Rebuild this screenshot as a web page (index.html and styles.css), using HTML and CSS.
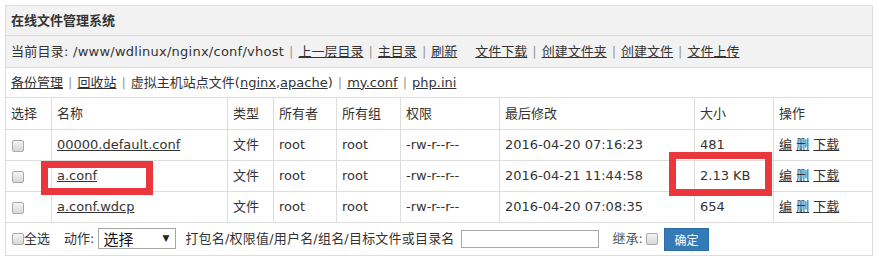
FILE: index.html
```html
<!DOCTYPE html>
<html lang="zh-CN">
<head>
<meta charset="utf-8">
<title>在线文件管理系统</title>
<link rel="stylesheet" href="styles.css">
</head>
<body>
<div class="page">
  <table class="fm">
    <colgroup>
      <col class="c-sel"><col class="c-name"><col class="c-type"><col class="c-owner"><col class="c-group"><col class="c-perm"><col class="c-mtime"><col class="c-size"><col class="c-ops">
    </colgroup>
    <tr class="title-row"><td colspan="9">在线文件管理系统</td></tr>
    <tr class="dir-row"><td colspan="9"><span class="path">当前目录: /www/wdlinux/nginx/conf/vhost</span><span class="sep">|</span><a href="#">上一层目录</a><span class="sep">|</span><a href="#">主目录</a><span class="sep">|</span><a href="#">刷新</a><a href="#" class="gap">文件下载</a><span class="sep">|</span><a href="#">创建文件夹</a><span class="sep">|</span><a href="#">创建文件</a><span class="sep">|</span><a href="#">文件上传</a></td></tr>
    <tr class="link-row"><td colspan="9"><a href="#">备份管理</a><span class="sep">|</span><a href="#">回收站</a><span class="sep">|</span>虚拟主机站点文件(<a href="#">nginx</a>,<a href="#">apache</a>)<span class="sep">|</span><a href="#">my.conf</a><span class="sep">|</span><a href="#">php.ini</a></td></tr>
    <tr class="head-row">
      <td>选择</td><td>名称</td><td>类型</td><td>所有者</td><td>所有组</td><td>权限</td><td>最后修改</td><td>大小</td><td>操作</td>
    </tr>
    <tr>
      <td><input type="checkbox" class="cb"></td><td><a href="#">00000.default.conf</a></td><td>文件</td><td>root</td><td>root</td><td>-rw-r--r--</td><td>2016-04-20 07:16:23</td><td>481</td><td class="ops"><a href="#">编</a> <a href="#">删</a> <a href="#">下载</a></td>
    </tr>
    <tr>
      <td><input type="checkbox" class="cb"></td><td><a href="#">a.conf</a></td><td>文件</td><td>root</td><td>root</td><td>-rw-r--r--</td><td>2016-04-21 11:44:58</td><td>2.13 KB</td><td class="ops"><a href="#">编</a> <a href="#">删</a> <a href="#">下载</a></td>
    </tr>
    <tr>
      <td><input type="checkbox" class="cb"></td><td><a href="#">a.conf.wdcp</a></td><td>文件</td><td>root</td><td>root</td><td>-rw-r--r--</td><td>2016-04-20 07:08:35</td><td>654</td><td class="ops"><a href="#">编</a> <a href="#">删</a> <a href="#">下载</a></td>
    </tr>
    <tr class="foot-row">
      <td colspan="9">
        <div class="actions">
          <label class="all"><input type="checkbox" class="cb">全选</label>
          <span class="act-label">动作:</span>
          <span class="sel-wrap"><select class="sel"><option>选择</option></select><span class="arrow">▼</span></span>
          <span class="hint">打包名/权限值/用户名/组名/目标文件或目录名</span>
          <input type="text" class="txt">
          <span class="inherit">继承:</span><input type="checkbox" class="cb">
          <button class="ok">确定</button>
        </div>
      </td>
    </tr>
  </table>
  <div class="mark mark-name"></div>
  <div class="mark mark-size"></div>
</div>
</body>
</html>
```

FILE: styles.css
```css
html, body {
  margin: 0;
  padding: 0;
  background: #fff;
}
body {
  font-family: "DejaVu Sans", "Noto Sans CJK SC", sans-serif;
  font-size: 13px;
  color: #333;
}
.page {
  position: relative;
  padding: 5px;
}
.fm {
  border-collapse: collapse;
  table-layout: fixed;
  width: 868px;
}
.fm td {
  border: 1px solid #ddd;
  padding: 0 5px;
  height: 30px;
  line-height: 20px;
  white-space: nowrap;
  overflow: hidden;
  vertical-align: middle;
}
.c-sel { width: 46px; }
.c-name { width: 176px; }
.c-type { width: 46px; }
.c-owner { width: 63px; }
.c-group { width: 64px; }
.c-perm { width: 99px; }
.c-mtime { width: 195px; }
.c-size { width: 79px; }
.c-ops { width: 99px; }

.fm a {
  color: #333;
  text-decoration: underline;
}
.title-row td {
  background: #f2f2f2;
  font-weight: bold;
  height: 29px;
}
.dir-row td {
  background: #f2f2f2;
  height: 31px;
}
.path { letter-spacing: 0.25px; }
.link-row td { height: 29px; }
.head-row td { height: 31px; }
.sep {
  color: #999;
  margin: 0 5px;
}
.gap { margin-left: 18px; }

.cb {
  -webkit-appearance: none;
  appearance: none;
  width: 12px;
  height: 12px;
  margin: 0 0 0 1px;
  border: 1px solid #a9a9a9;
  border-radius: 2px;
  background: linear-gradient(#f4f4f4, #d8d8d8);
  vertical-align: middle;
}

.foot-row td { height: 32px; }
.actions {
  display: flex;
  align-items: center;
}
.all {
  display: flex;
  align-items: center;
}
.act-label { margin-left: 14px; margin-right: 4px; }
.sel-wrap {
  position: relative;
  display: inline-block;
}
.sel {
  -webkit-appearance: none;
  appearance: none;
  width: 78px;
  height: 21px;
  border: 1px solid #a6a6a6;
  border-radius: 0;
  background: #fff;
  font-family: "Noto Sans CJK SC", sans-serif;
  font-size: 15px;
  color: #111;
  padding: 0 0 0 4px;
  line-height: 19px;
}
.arrow {
  position: absolute;
  right: 7px;
  top: 4px;
  font-size: 9px;
  line-height: 12px;
  color: #222;
  pointer-events: none;
}
.hint { margin-left: 9px; letter-spacing: 0.2px; }
.txt {
  width: 134px;
  height: 16px;
  margin-left: 6px;
  padding: 0 1px;
  border: 1px solid #a9a9a9;
  border-radius: 0;
}
.inherit { margin-left: 14px; margin-right: 2px; color: #555; }
.ok {
  margin-left: 6px;
  width: 45px;
  height: 23px;
  border: 1px solid #2e6da4;
  border-radius: 0;
  background: #337ab7;
  color: #fff;
  font-family: "Noto Sans CJK SC", sans-serif;
  font-size: 12px;
  padding: 0;
}

.mark {
  position: absolute;
  border: 7px solid #e9373b;
  box-sizing: border-box;
}
.mark-name {
  left: 41px;
  top: 161px;
  width: 112px;
  height: 34px;
}
.mark-size {
  left: 669px;
  top: 152px;
  width: 103px;
  height: 44px;
}
```
